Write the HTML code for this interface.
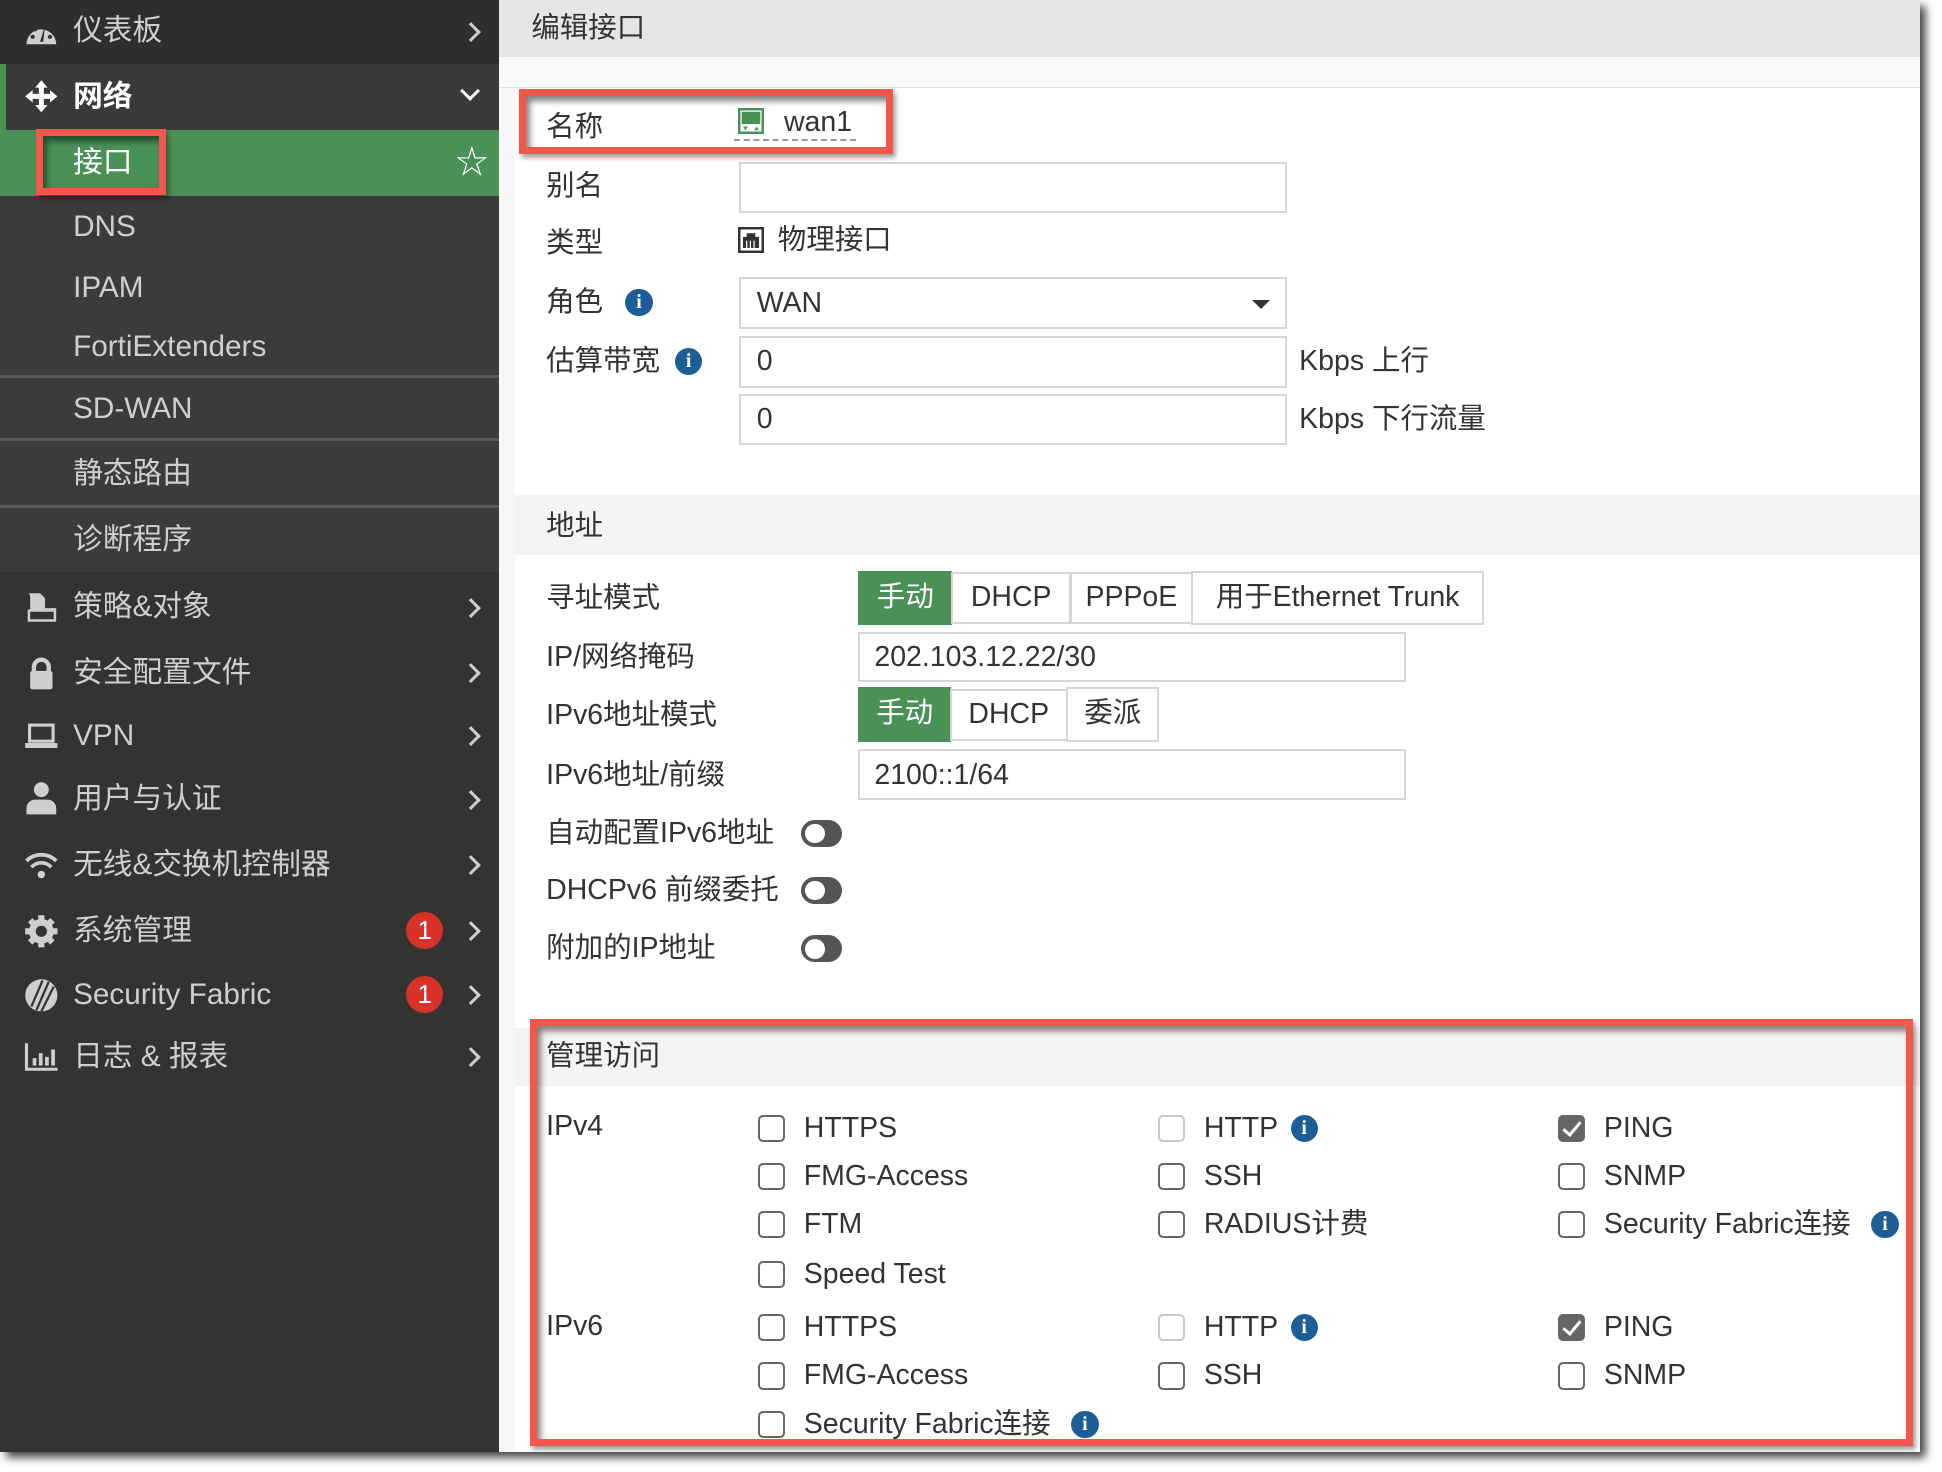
<!DOCTYPE html>
<html><head><meta charset="utf-8">
<style>
html,body{margin:0;padding:0;background:#fff;width:1942px;height:1472px;overflow:hidden}
#w{zoom:1.2385;position:relative;width:1568px;height:1189px;font-family:"Liberation Sans","Noto Sans CJK SC",sans-serif}
#shot{position:absolute;left:0;top:0;width:1550px;height:1172px;background:#f7f7f7;overflow:hidden;box-shadow:5px 5px 7px rgba(0,0,0,.75)}
.t{position:absolute;white-space:nowrap;line-height:30px;font-size:23px}
#side{position:absolute;left:0;top:0;width:403px;height:1172px;background:#333}
#side .t{color:#cfcfcf;font-size:24px}
.row{position:absolute;left:0;width:403px}
.chev{position:absolute;left:375px;width:9px;height:9px;border-right:3px solid #cfcfcf;border-bottom:3px solid #cfcfcf;transform:rotate(-45deg)}
.badge{position:absolute;left:328px;width:30px;height:30px;border-radius:50%;background:#d8312a;color:#fff;font-size:21px;line-height:30px;text-align:center}
.ic{position:absolute;left:19px}
.lab{color:#333}
.inp{position:absolute;background:#fff;border:2px solid #d6d6d6;box-sizing:border-box}
.info{position:absolute;width:22px;height:22px;border-radius:50%;background:#1d5e96;color:#fff;font:bold 16px/22px "Liberation Serif",serif;text-align:center}
.btn{position:absolute;box-sizing:border-box;border:2px solid #d6d6d6;background:#fff;color:#333;font-size:23px;text-align:center}
.btn.on{background:#4a9157;border-color:#4a9157;color:#fff}
.tog{position:absolute;left:647px;width:33px;height:22px;border-radius:11px;background:#555}
.tog:after{content:"";position:absolute;left:3px;top:3px;width:16px;height:16px;border-radius:50%;background:#fff}
.cb{position:absolute;width:22px;height:22px;box-sizing:border-box;border:2px solid #666;border-radius:4px;background:#fff}
.cb.dis{border-color:#c8c8c8}
.cb.chk{background:#666}
.cb.chk:after{content:"";position:absolute;left:6px;top:1px;width:6px;height:12px;border-right:3px solid #fff;border-bottom:3px solid #fff;transform:rotate(40deg)}
.red{position:absolute;border:6px solid #f3574b;box-shadow:inset 3px 4px 5px rgba(0,0,0,.5),2px 3px 4px rgba(0,0,0,.4)}
</style></head><body><div id="w"><div id="shot">
<div id="side">
 <div class="row" style="top:0;height:52px;background:#2e2e2e"></div>
 <div class="row" style="top:52px;height:53px;background:#3a3a3a;border-left:5px solid #4a9157;box-sizing:border-box"></div>
 <div class="row" style="top:105px;height:53px;background:#4a9157"></div>
 <div class="row" style="top:158px;height:304px;background:#3b3b3b"></div>
 <div class="row" style="top:303px;height:2px;background:#5a5a5a"></div>
 <div class="row" style="top:354px;height:2px;background:#5a5a5a"></div>
 <div class="row" style="top:408px;height:2px;background:#5a5a5a"></div>

 <svg class="ic" style="top:14px" width="28" height="24" viewBox="0 0 28 24"><path d="M2 22A12 12 0 1 1 26 22Z" fill="#cfcfcf"/><circle cx="7" cy="16" r="1.6" fill="#2e2e2e"/><circle cx="9" cy="10" r="1.6" fill="#2e2e2e"/><circle cx="21" cy="16" r="1.6" fill="#2e2e2e"/><path d="M13 20L17 7L15.5 20Z" fill="#2e2e2e"/></svg>
 <div class="t" style="left:59px;top:10px">仪表板</div><div class="chev" style="top:20px"></div>

 <svg class="ic" style="top:64px" width="28" height="28" viewBox="0 0 28 28"><path d="M14 1L19 7H16V12H21V9L27 14L21 19V16H16V21H19L14 27L9 21H12V16H7V19L1 14L7 9V12H12V7H9Z" fill="#fff"/></svg>
 <div class="t" style="left:59px;top:63px;color:#fff;font-weight:bold">网络</div>
 <div class="chev" style="left:374px;top:68px;transform:rotate(45deg);border-color:#fff"></div>

 <div class="t" style="left:59px;top:116px;color:#fff">接口</div>
 <div class="t" style="left:368px;top:116px;color:#fff;font-size:26px">☆</div>
 <div class="red" style="left:29px;top:104px;width:94px;height:42px"></div>

 <div class="t" style="left:59px;top:168px">DNS</div>
 <div class="t" style="left:59px;top:217px">IPAM</div>
 <div class="t" style="left:59px;top:265px">FortiExtenders</div>
 <div class="t" style="left:59px;top:315px">SD-WAN</div>
 <div class="t" style="left:59px;top:367px">静态路由</div>
 <div class="t" style="left:59px;top:421px">诊断程序</div>

 <svg class="ic" style="top:478px" width="28" height="26" viewBox="0 0 28 26"><path d="M4 1H13L17 5V13H26V24H3V14H5V3Z" fill="#cfcfcf"/><path d="M5 16H24V22H5Z" fill="#333"/></svg>
 <div class="t" style="left:59px;top:475px">策略&amp;对象</div><div class="chev" style="top:485px"></div>
 <svg class="ic" style="top:530px" width="28" height="28" viewBox="0 0 28 28"><path d="M8 13V9A6 6 0 0 1 20 9V13" stroke="#cfcfcf" stroke-width="3.5" fill="none"/><rect x="5" y="12" width="18" height="15" rx="2" fill="#cfcfcf"/></svg>
 <div class="t" style="left:59px;top:528px">安全配置文件</div><div class="chev" style="top:538px"></div>
 <svg class="ic" style="top:583px" width="28" height="24" viewBox="0 0 28 24"><rect x="4.5" y="2.5" width="19" height="13" fill="none" stroke="#cfcfcf" stroke-width="2.5"/><rect x="1" y="17" width="26" height="4" fill="#cfcfcf"/></svg>
 <div class="t" style="left:59px;top:579px">VPN</div><div class="chev" style="top:589px"></div>
 <svg class="ic" style="top:631px" width="28" height="28" viewBox="0 0 28 28"><circle cx="14" cy="7" r="6" fill="#cfcfcf"/><path d="M2 27V22A7 7 0 0 1 9 15H19A7 7 0 0 1 26 22V27Z" fill="#cfcfcf"/></svg>
 <div class="t" style="left:59px;top:630px">用户与认证</div><div class="chev" style="top:640px"></div>
 <svg class="ic" style="top:687px" width="28" height="24" viewBox="0 0 28 24"><path d="M2 8A17 17 0 0 1 26 8M6 13A11 11 0 0 1 22 13" stroke="#cfcfcf" stroke-width="3" fill="none"/><circle cx="14" cy="19" r="3" fill="#cfcfcf"/></svg>
 <div class="t" style="left:59px;top:683px">无线&amp;交换机控制器</div><div class="chev" style="top:693px"></div>
 <svg class="ic" style="top:738px" width="28" height="28" viewBox="0 0 28 28"><circle cx="14" cy="14" r="10" fill="#cfcfcf"/><g stroke="#cfcfcf" stroke-width="5"><path d="M14 1V27M1 14H27M5 5L23 23M23 5L5 23"/></g><circle cx="14" cy="14" r="4.5" fill="#333"/></svg>
 <div class="t" style="left:59px;top:736px">系统管理</div><div class="badge" style="top:736px">1</div><div class="chev" style="top:746px"></div>
 <svg class="ic" style="top:790px" width="28" height="28" viewBox="0 0 28 28"><circle cx="14" cy="14" r="13" fill="#cfcfcf"/><path d="M10 26L20 3M14 27L24 7M6 23L15 2" stroke="#333" stroke-width="1.8"/></svg>
 <div class="t" style="left:59px;top:788px">Security Fabric</div><div class="badge" style="top:788px">1</div><div class="chev" style="top:798px"></div>
 <svg class="ic" style="top:841px" width="28" height="24" viewBox="0 0 28 24"><path d="M2 1V22H27" stroke="#cfcfcf" stroke-width="2.5" fill="none"/><rect x="7" y="13" width="3" height="6" fill="#cfcfcf"/><rect x="12" y="9" width="3" height="10" fill="#cfcfcf"/><rect x="17" y="12" width="3" height="7" fill="#cfcfcf"/><rect x="22" y="6" width="3" height="13" fill="#cfcfcf"/></svg>
 <div class="t" style="left:59px;top:838px">日志 &amp; 报表</div><div class="chev" style="top:848px"></div>
</div>

<div style="position:absolute;left:403px;top:0;width:1147px;height:46px;background:#e5e5e5"></div>
<div class="t lab" style="left:429px;top:8px">编辑接口</div>
<div style="position:absolute;left:403px;top:46px;width:1147px;height:24px;background:#f9f9f9;border-bottom:1px solid #e2e2e2"></div>
<div style="position:absolute;left:416px;top:71px;width:1134px;height:1101px;background:#fff"></div>

<div class="t lab" style="left:441px;top:88px">名称</div>
<svg style="position:absolute;left:596px;top:87px" width="21" height="21" viewBox="0 0 21 21"><rect x="1" y="1" width="19" height="19" fill="#fff" stroke="#4a9157" stroke-width="2"/><rect x="3" y="3" width="15" height="10" fill="#4a9157"/><path d="M4 15H8L6 18ZM13 18H17L15 15Z" fill="#4a9157"/></svg>
<div class="t lab" style="left:633px;top:84px">wan1</div>
<div style="position:absolute;left:593px;top:112px;width:98px;border-top:2px dashed #999"></div>
<div class="red" style="left:419px;top:72px;width:291px;height:41px"></div>

<div class="t lab" style="left:441px;top:136px">别名</div>
<div class="inp" style="left:597px;top:131px;width:442px;height:41px"></div>
<div class="t lab" style="left:441px;top:182px">类型</div>
<svg style="position:absolute;left:596px;top:183px" width="21" height="21" viewBox="0 0 21 21"><rect x="1" y="1" width="19" height="19" fill="#fff" stroke="#333" stroke-width="2"/><path d="M4 17V8H7V5H14V8H17V17Z" fill="#333"/><path d="M7 11V17M10 11V17M13 11V17" stroke="#fff" stroke-width="1"/></svg>
<div class="t lab" style="left:628px;top:179px">物理接口</div>

<div class="t lab" style="left:441px;top:229px">角色</div><div class="info" style="left:505px;top:233px">i</div>
<div class="inp" style="left:597px;top:224px;width:442px;height:42px"></div>
<div class="t lab" style="left:611px;top:230px">WAN</div>
<div style="position:absolute;left:1011px;top:242px;border-left:8px solid transparent;border-right:8px solid transparent;border-top:8px solid #333"></div>

<div class="t lab" style="left:441px;top:277px">估算带宽</div><div class="info" style="left:545px;top:281px">i</div>
<div class="inp" style="left:597px;top:271px;width:442px;height:42px"></div>
<div class="t lab" style="left:611px;top:277px">0</div>
<div class="t lab" style="left:1049px;top:277px">Kbps 上行</div>
<div class="inp" style="left:597px;top:318px;width:442px;height:41px"></div>
<div class="t lab" style="left:611px;top:324px">0</div>
<div class="t lab" style="left:1049px;top:324px">Kbps 下行流量</div>

<div style="position:absolute;left:416px;top:400px;width:1134px;height:48px;background:#f4f4f4"></div>
<div class="t lab" style="left:441px;top:410px">地址</div>

<div class="t lab" style="left:441px;top:468px">寻址模式</div>
<div class="btn on" style="left:693px;top:461px;width:76px;height:44px;line-height:40px">手动</div>
<div class="btn" style="left:768px;top:462px;width:97px;height:42px;line-height:38px">DHCP</div>
<div class="btn" style="left:864px;top:462px;width:99px;height:42px;line-height:38px">PPPoE</div>
<div class="btn" style="left:962px;top:461px;width:236px;height:44px;line-height:40px">用于Ethernet Trunk</div>

<div class="t lab" style="left:441px;top:516px">IP/网络掩码</div>
<div class="inp" style="left:693px;top:510px;width:442px;height:41px"></div>
<div class="t lab" style="left:706px;top:516px">202.103.12.22/30</div>

<div class="t lab" style="left:441px;top:563px">IPv6地址模式</div>
<div class="btn on" style="left:693px;top:555px;width:75px;height:44px;line-height:40px">手动</div>
<div class="btn" style="left:767px;top:556px;width:95px;height:42px;line-height:38px">DHCP</div>
<div class="btn" style="left:861px;top:555px;width:75px;height:44px;line-height:40px">委派</div>

<div class="t lab" style="left:441px;top:611px">IPv6地址/前缀</div>
<div class="inp" style="left:693px;top:605px;width:442px;height:41px"></div>
<div class="t lab" style="left:706px;top:611px">2100::1/64</div>

<div class="t lab" style="left:441px;top:658px">自动配置IPv6地址</div><div class="tog" style="top:662px"></div>
<div class="t lab" style="left:441px;top:704px">DHCPv6 前缀委托</div><div class="tog" style="top:708px"></div>
<div class="t lab" style="left:441px;top:751px">附加的IP地址</div><div class="tog" style="top:755px"></div>

<div style="position:absolute;left:416px;top:830px;width:1134px;height:47px;background:#f4f4f4"></div>
<div class="t lab" style="left:441px;top:838px">管理访问</div>

<div class="t lab" style="left:441px;top:895px">IPv4</div>
<div class="cb" style="left:612px;top:900px"></div><div class="t lab" style="left:649px;top:896px">HTTPS</div>
<div class="cb" style="left:612px;top:939px"></div><div class="t lab" style="left:649px;top:935px">FMG-Access</div>
<div class="cb" style="left:612px;top:978px"></div><div class="t lab" style="left:649px;top:974px">FTM</div>
<div class="cb" style="left:612px;top:1018px"></div><div class="t lab" style="left:649px;top:1014px">Speed Test</div>
<div class="cb dis" style="left:935px;top:900px"></div><div class="t lab" style="left:972px;top:896px">HTTP</div><div class="info" style="left:1042px;top:900px">i</div>
<div class="cb" style="left:935px;top:939px"></div><div class="t lab" style="left:972px;top:935px">SSH</div>
<div class="cb" style="left:935px;top:978px"></div><div class="t lab" style="left:972px;top:974px">RADIUS计费</div>
<div class="cb chk" style="left:1258px;top:900px"></div><div class="t lab" style="left:1295px;top:896px">PING</div>
<div class="cb" style="left:1258px;top:939px"></div><div class="t lab" style="left:1295px;top:935px">SNMP</div>
<div class="cb" style="left:1258px;top:978px"></div><div class="t lab" style="left:1295px;top:974px">Security Fabric连接</div><div class="info" style="left:1511px;top:978px">i</div>

<div class="t lab" style="left:441px;top:1056px">IPv6</div>
<div class="cb" style="left:612px;top:1061px"></div><div class="t lab" style="left:649px;top:1057px">HTTPS</div>
<div class="cb" style="left:612px;top:1100px"></div><div class="t lab" style="left:649px;top:1096px">FMG-Access</div>
<div class="cb" style="left:612px;top:1139px"></div><div class="t lab" style="left:649px;top:1135px">Security Fabric连接</div><div class="info" style="left:865px;top:1139px">i</div>
<div class="cb dis" style="left:935px;top:1061px"></div><div class="t lab" style="left:972px;top:1057px">HTTP</div><div class="info" style="left:1042px;top:1061px">i</div>
<div class="cb" style="left:935px;top:1100px"></div><div class="t lab" style="left:972px;top:1096px">SSH</div>
<div class="cb chk" style="left:1258px;top:1061px"></div><div class="t lab" style="left:1295px;top:1057px">PING</div>
<div class="cb" style="left:1258px;top:1100px"></div><div class="t lab" style="left:1295px;top:1096px">SNMP</div>

<div class="red" style="left:428px;top:823px;width:1105px;height:333px"></div>
</div></div></body></html>
